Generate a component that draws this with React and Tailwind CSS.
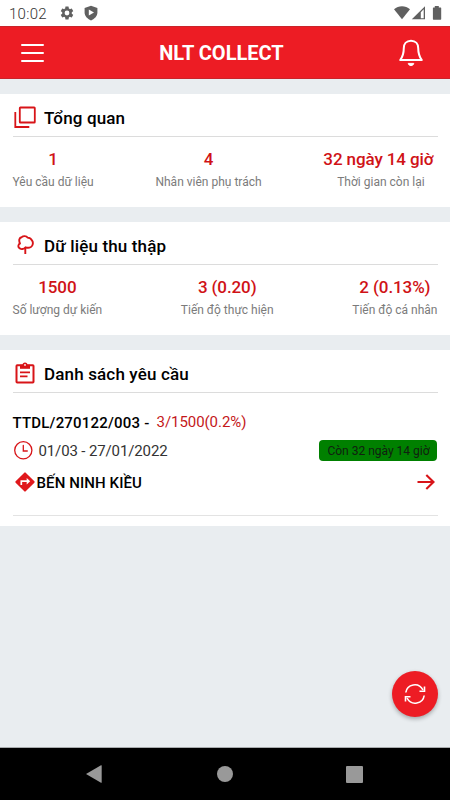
import React from "react";

const RED = "#d81418";

function StatusBar() {
  return (
    <div className="flex h-[26px] items-center justify-between bg-white pl-[9px] pr-[8px] text-[#333]">
      <div className="flex items-center">
        <span className="w-[50px] pt-px text-[15px] font-light leading-[26px] tracking-[0.3px]">10:02</span>
        <svg className="mr-[9px]" width="16" height="16" viewBox="0 0 24 24" fill="#606060">
          <path d="M19.14 12.94c.04-.3.06-.61.06-.94 0-.32-.02-.64-.07-.94l2.03-1.58a.49.49 0 0 0 .12-.61l-1.92-3.32a.49.49 0 0 0-.59-.22l-2.39.96c-.5-.38-1.03-.7-1.62-.94l-.36-2.54a.48.48 0 0 0-.48-.41h-3.84c-.24 0-.43.17-.47.41l-.36 2.54c-.59.24-1.13.57-1.62.94l-2.39-.96a.49.49 0 0 0-.59.22L2.74 8.87c-.12.21-.08.47.12.61l2.03 1.58c-.05.3-.09.63-.09.94s.02.64.07.94l-2.03 1.58a.49.49 0 0 0-.12.61l1.92 3.32c.12.22.37.29.59.22l2.39-.96c.5.38 1.03.7 1.62.94l.36 2.54c.05.24.24.41.48.41h3.84c.24 0 .44-.17.47-.41l.36-2.54c.59-.24 1.13-.56 1.62-.94l2.39.96c.22.08.47 0 .59-.22l1.92-3.32a.49.49 0 0 0-.12-.61zM12 15.6a3.6 3.6 0 1 1 0-7.2 3.6 3.6 0 0 1 0 7.2z" />
        </svg>
        <svg width="14" height="16" viewBox="0 0 14 16">
          <path d="M7 .8 13.4 3v4.6c0 3.4-2.6 6.4-6.4 7.8C3.200 14 .6 11 .6 7.600V3z" fill="#606060" />
          <path d="M4.800 4.500v6l5.200-3z" fill="white" />
        </svg>
      </div>
      <svg width="48" height="16" viewBox="0 0 48 16" fill="#606060">
        <path d="M0 4.200C4.500.300 11.500.300 16 4.200L8 14.300z" />
        <path fillRule="evenodd" d="M17.800 14.300 31 1.200v13.100zM26.800 7.200v6h2.900V4.300z" />
        <path d="M40.800 1h4v1.500h1.800q.6 0 .6.600v11q0 .6-.6.600H39.500q-.6 0-.6-.6v-11q0-.6.600-.6h1.300z" />
      </svg>
    </div>
  );
}

function Header() {
  return (
    <div className="flex h-[53px] items-center justify-between border-y border-[#c9242a] bg-[#ed1c24] pl-[21px] pr-[26px]">
      <svg width="24" height="18" viewBox="0 0 24 18" stroke="white" strokeWidth="2" strokeLinecap="round">
        <path d="M1 1h21M1 9h21M1 17h21" />
      </svg>
      <h1 className="text-[20px] font-bold leading-6 text-white">NLT COLLECT</h1>
      <svg width="26" height="28" viewBox="0 0 26 28" fill="none" stroke="white" strokeWidth="2" strokeLinejoin="round" strokeLinecap="round">
        <path d="M13 1.700c-4.800 0-7.200 3.500-7.200 7.200 0 5.500-.8 8.300-3.600 12.100h21.600c-2.800-3.800-3.600-6.600-3.600-12.100 0-3.700-2.400-7.200-7.200-7.200z" />
        <path d="M10.300 24.800c.6 2.500 4.800 2.500 5.400 0z" fill="white" strokeWidth="1" />
      </svg>
    </div>
  );
}

function SectionTitle({ icon, children }) {
  return (
    <div className="flex h-[43px] items-center border-b border-[#dcdcdc] pt-[5px]">
      <div className="flex w-[31.500px] items-center">{icon}</div>
      <h2 className="text-[17px] font-medium leading-6 tracking-[0.15px] text-black">{children}</h2>
    </div>
  );
}

function Stat({ value, label, className = "", labelClass = "" }) {
  return (
    <div className={"flex flex-col items-center " + className}>
      <span className="text-[17px] font-medium leading-[22px] tracking-[-0.1px] text-[#d01216]">{value}</span>
      <span className={"mt-[2px] whitespace-nowrap text-[12px] leading-[20px] text-[#7b7b7b] " + labelClass}>{label}</span>
    </div>
  );
}

const copyIcon = (
  <svg className="ml-px" width="22" height="23" viewBox="0 0 22 23" fill="none" stroke={RED} strokeWidth="1.800">
    <rect x="5.800" y="1.500" width="15" height="15" rx="0.600" />
    <path d="M1.300 6v15h14" />
  </svg>
);

const treeIcon = (
  <svg className="mb-px ml-[4px]" width="17" height="20" viewBox="0 0 17 20" fill="none" stroke={RED} strokeWidth="1.900" strokeLinejoin="round">
    <path d="M5.500 14C2.500 14.600.800 12 1.600 10c.3-.8.900-1.300 1.400-1.500C1.500 5.500 2.300 2.500 4.700 2.200 6.300.600 9.400.700 10.500 2.600c2.400.2 3.900 1.300 4.600 3.100 1.400 1.800.8 5.100-1.200 6.300-1.600.9-3.500 1-5.300.3-.6 1-1.600 1.700-3.100 1.700z" />
    <path d="M8.300 12.500v6.500" />
  </svg>
);

const clipboardIcon = (
  <svg className="mb-px ml-[2px]" width="20" height="22" viewBox="0 0 20 22" fill="none" stroke={RED} strokeWidth="2">
    <rect x="1.500" y="3.300" width="17" height="17.200" rx="0.700" />
    <path d="M5 2.800h10v4H5z" fill={RED} stroke="none" />
    <circle cx="10" cy="2.900" r="1.700" fill="white" strokeWidth="1.600" />
    <path d="M5 10.300h10M5 14.300h7.500" strokeWidth="1.800" />
  </svg>
);

function RequestItem() {
  return (
    <div className="flex h-[123px] flex-col border-b border-[#e3e3e3] pt-[19px]">
      <div className="flex h-[21px] items-center whitespace-nowrap text-[15px] leading-[21px]">
        <span className="w-[144px] pt-px font-medium tracking-[0.200px] text-black">TTDL/270122/003 -</span>
        <span className="tracking-[-0.050px] text-[#c4171a]">3/1500(0.2%)</span>
      </div>
      <div className="mt-[7px] flex h-[21px] items-center justify-between">
        <div className="flex items-center">
          <svg className="ml-[1px] mr-[6px]" width="19" height="19" viewBox="0 0 19 19" fill="none" stroke={RED} strokeWidth="1.300" strokeLinecap="round">
            <circle cx="9.300" cy="9.300" r="8.600" />
            <path d="M9.300 4.500v5.500h4" />
          </svg>
          <span className="pt-px text-[15px] leading-[21px] tracking-[-0.130px] text-[#333]">01/03 - 27/01/2022</span>
        </div>
        <div className="mr-[0.500px] h-[21px] w-[118px] whitespace-nowrap rounded-[4px] bg-[#008000] pl-px text-center text-[12px] leading-[22px] text-[#102010]">Còn 32 ngày 14 giờ</div>
      </div>
      <div className="mt-[10px] flex h-[22px] items-center justify-between">
        <div className="flex items-center">
          <svg className="ml-[2px] mr-[2px]" width="20" height="20" viewBox="0 0 20 20">
            <rect x="2.900" y="2.900" width="14.200" height="14.200" rx="1" transform="rotate(45 10 10)" fill="#e0181c" />
            <path d="M6.300 13V9.200h5.800" fill="none" stroke="white" strokeWidth="1.700" />
            <path d="M11.700 6 15.200 9.200l-3.500 3.200z" fill="white" />
          </svg>
          <span className="pt-px text-[15px] font-medium leading-[22px] tracking-[0.100px] text-black">BẾN NINH KIỀU</span>
        </div>
        <svg className="mr-[3px]" width="18" height="16" viewBox="0 0 18 16" fill="none" stroke={RED} strokeWidth="2.100">
          <path d="M.500 8h16M9.300 1l7.200 7-7.200 7" />
        </svg>
      </div>
    </div>
  );
}

export default function App() {
  return (
    <div className="flex h-[800px] w-[450px] flex-col overflow-hidden bg-[#e9edf0] font-['Roboto','Noto_Sans',sans-serif]">
      <StatusBar />
      <Header />
      <main className="flex flex-1 flex-col gap-[15px] pt-[15px]">
        <section className="h-[113px] bg-white px-[12.500px]">
          <SectionTitle icon={copyIcon}>Tổng quan</SectionTitle>
          <div className="flex justify-between pt-[11px]">
            <Stat value="1" label="Yêu cầu dữ liệu" />
            <Stat value="4" label="Nhân viên phụ trách" />
            <Stat value="32 ngày 14 giờ" label="Thời gian còn lại" className="mr-[4px]" labelClass="pl-[5px]" />
          </div>
        </section>
        <section className="h-[113px] bg-white px-[12.500px]">
          <SectionTitle icon={treeIcon}>Dữ liệu thu thập</SectionTitle>
          <div className="flex justify-between pt-[11px]">
            <Stat value="1500" label="Số lượng dự kiến" />
            <Stat value="3 (0.20)" label="Tiến độ thực hiện" />
            <Stat value="2 (0.13%)" label="Tiến độ cá nhân" />
          </div>
        </section>
        <section className="h-[176px] bg-white px-[12.500px]">
          <SectionTitle icon={clipboardIcon}>Danh sách yêu cầu</SectionTitle>
          <RequestItem />
        </section>
        <button className="mr-[12px] mt-[130px] flex h-[46px] w-[46px] items-center justify-center self-end rounded-full bg-[#ed1c24] shadow-[0_2px_4px_rgba(0,0,0,0.3)]">
          <svg width="22" height="22" viewBox="0 0 22 22" fill="none" stroke="white" strokeWidth="1.600">
            <path d="M1.800 9.500C3 1.200 14.500-1.500 19 7M20.200 12.500C19 20.800 7.500 23.500 3 15" />
            <path d="M20.500 3.500v4.700h-5M1.500 18.500v-4.700h5" />
          </svg>
        </button>
      </main>
      <nav className="flex h-[53px] shrink-0 items-center justify-between border-t border-[#a8abad] bg-black pl-[86px] pr-[87px]">
        <svg width="16" height="18" viewBox="0 0 16 18" fill="#999"><path d="M0 9 15 .300q.7-.3.700.5v16.400q0 .8-.7.500z" /></svg>
        <div className="ml-[2px] h-4 w-4 rounded-full bg-[#999]" />
        <div className="h-[17px] w-[17px] rounded-[1px] bg-[#999]" />
      </nav>
    </div>
  );
}
